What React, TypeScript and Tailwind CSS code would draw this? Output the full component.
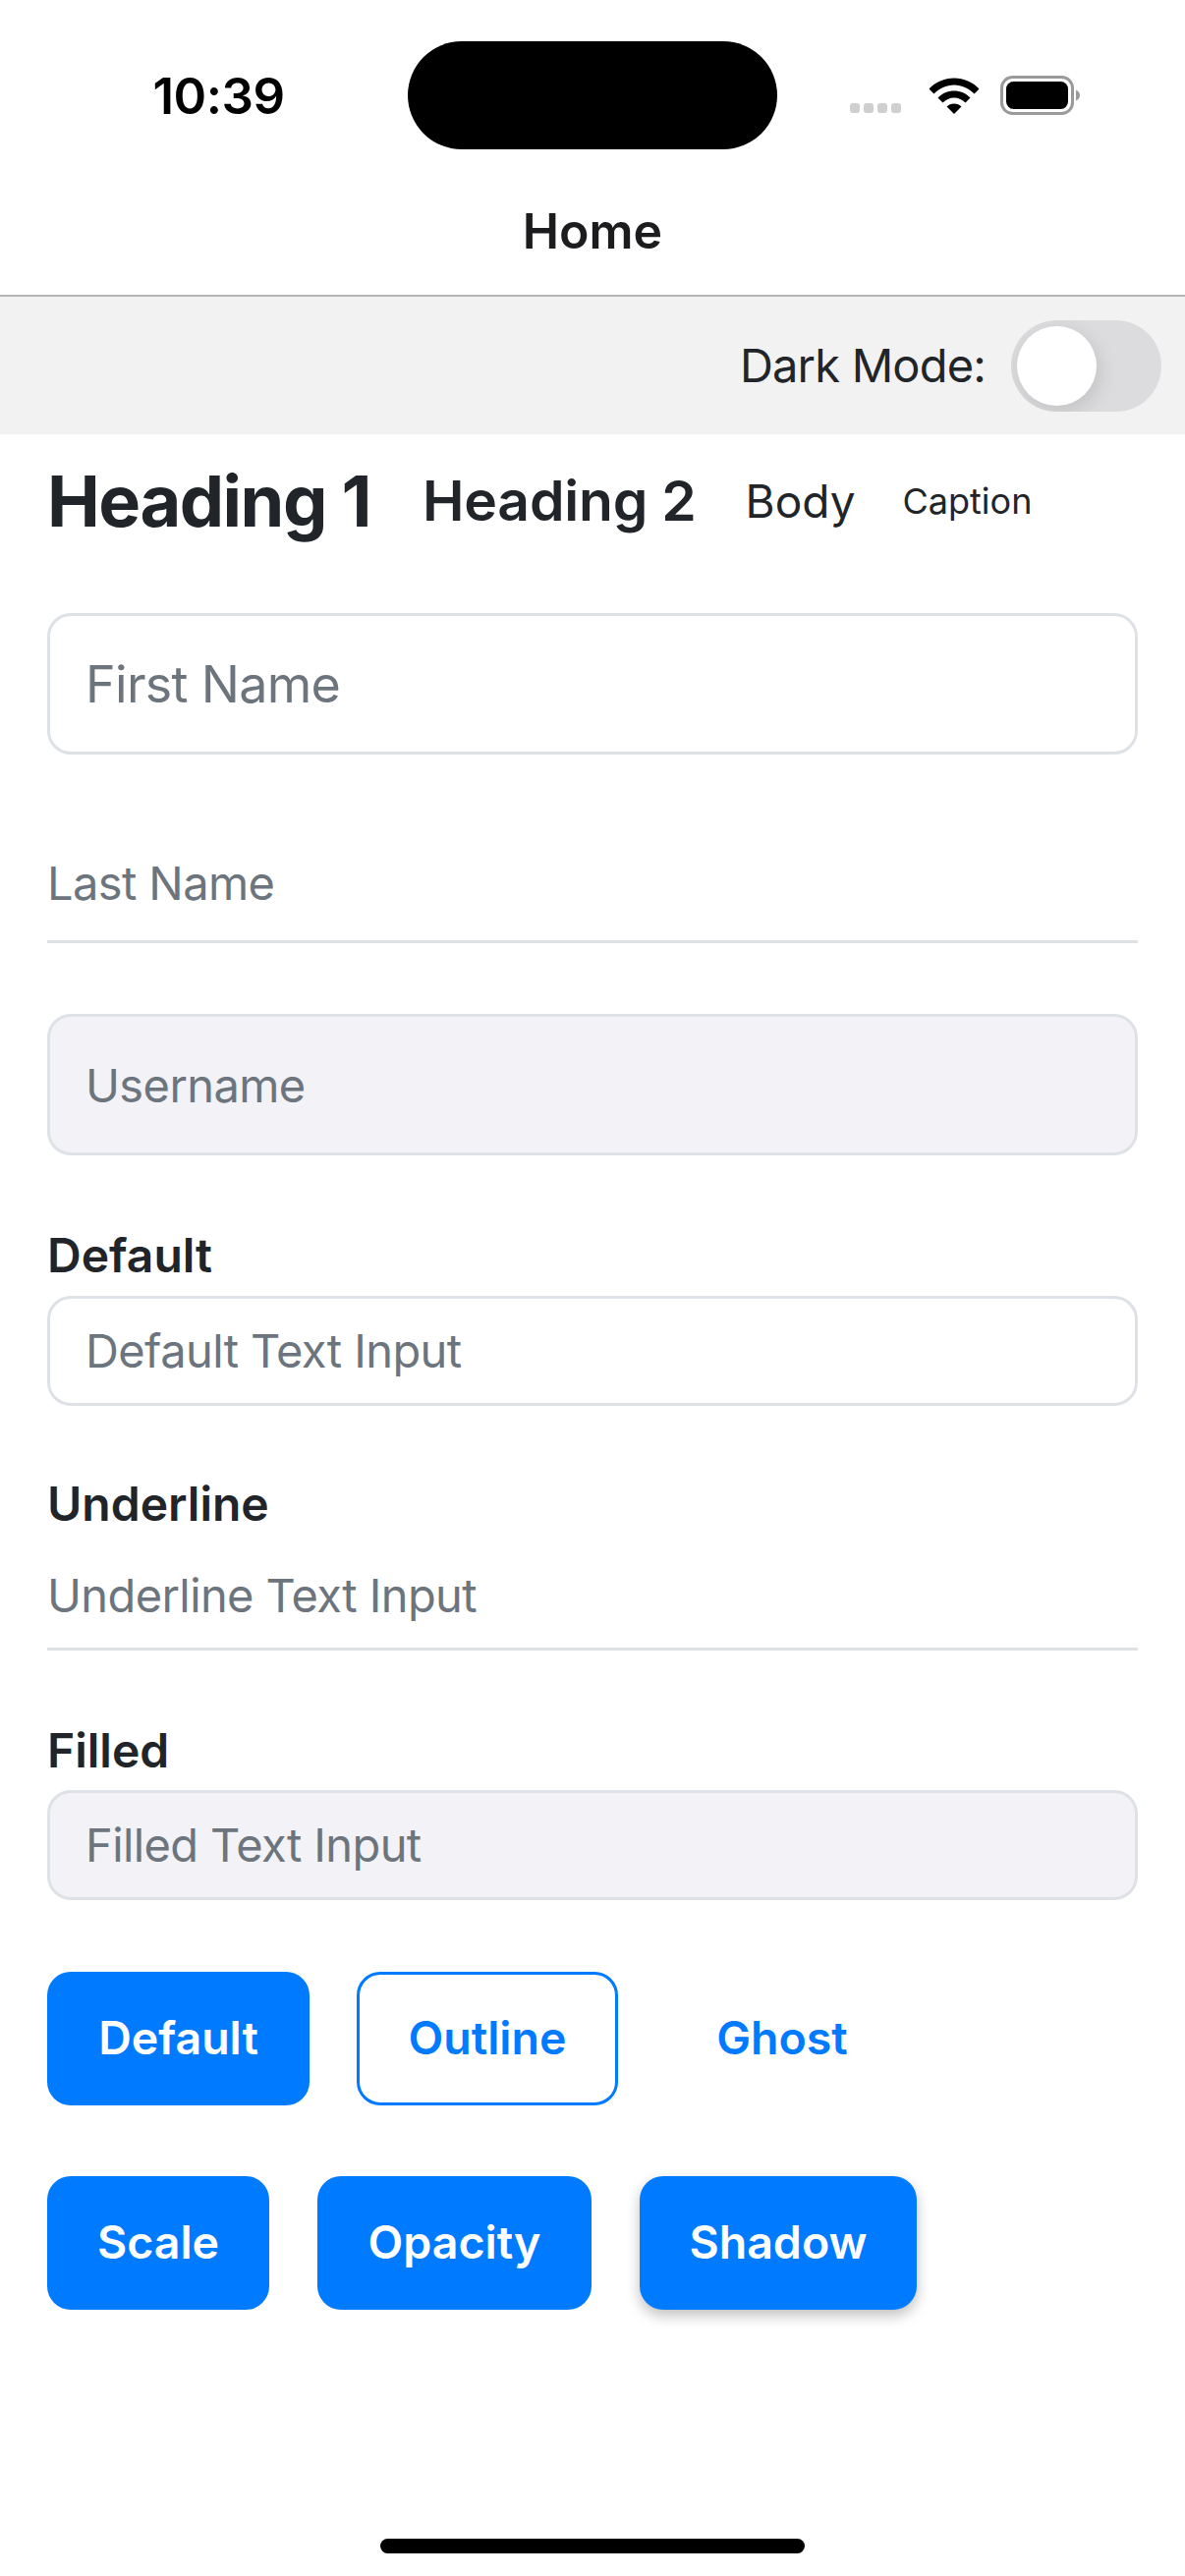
const FONT = "font-['Inter','Liberation_Sans',sans-serif]";

function WifiIcon() {
  return (
    <svg width="52" height="38" viewBox="0 0 52 38" fill="#000">
      <path d="M0.5 12.5C7 5.5 16 1.5 26 1.5S45 5.5 51.5 12.5L46.5 17.5C41 12 34 8.5 26 8.5S11 12 5.5 17.5Z" />
      <path d="M9.5 21.5C14 17 19.500 14.500 26 14.500S38 17 42.500 21.500L37.500 26.500C34.500 23.500 30.500 21.500 26 21.500S17.500 23.500 14.500 26.500Z" />
      <path d="M18.500 30.500C20.500 28.500 23 27.500 26 27.500S31.500 28.500 33.500 30.500L26 38Z" />
    </svg>
  );
}

function BatteryIcon() {
  return (
    <svg width="82" height="40" viewBox="0 0 82 40" fill="none">
      <rect x="1.5" y="1.5" width="72" height="37" rx="11" stroke="#9a9a9a" strokeWidth="3" />
      <rect x="6" y="6" width="63" height="28" rx="7.5" fill="#000" />
      <path d="M77 14.500C79.500 15.500 81 17.500 81 20S79.500 24.500 77 25.500Z" fill="#9a9a9a" />
    </svg>
  );
}

function StatusBar() {
  return (
    <div className="flex h-[180px] shrink-0 items-center pt-[14px]">
      <div className="flex w-[415px] justify-center pl-[30px]">
        <span className="text-[51px] leading-none font-semibold tracking-[-0.5px] text-black">10:39</span>
      </div>
      <div className="h-[110px] w-[376px] shrink-0 rounded-[55px] bg-black" />
      <div className="flex flex-1 items-center pl-[74px]">
        <div className="mt-[26px] flex gap-[4px]">
          <span className="h-[10px] w-[10px] rounded-[3px] bg-[#cfcfcf]" />
          <span className="h-[10px] w-[10px] rounded-[3px] bg-[#cfcfcf]" />
          <span className="h-[10px] w-[10px] rounded-[3px] bg-[#cfcfcf]" />
          <span className="h-[10px] w-[10px] rounded-[3px] bg-[#cfcfcf]" />
        </div>
        <div className="ml-[28px]"><WifiIcon /></div>
        <div className="ml-[21px]"><BatteryIcon /></div>
      </div>
    </div>
  );
}

const PLACEHOLDER = "text-[47px] tracking-[-0.6px] text-[#6c757d]";

function Box({ text, filled }: { text: string; filled?: boolean }) {
  return (
    <div className={`flex h-[112px] items-center rounded-[24px] border-[3px] border-[#dee2e6] px-[36px] ${PLACEHOLDER} ${filled ? "bg-[#f2f2f7]" : "bg-white"}`}>
      {text}
    </div>
  );
}

function Label({ text }: { text: string }) {
  return <div className="text-[48px] leading-[54px] font-semibold text-[#212529]">{text}</div>;
}

function Btn({ text, kind = "solid", width }: { text: string; kind?: "solid" | "outline" | "ghost" | "shadow"; width: string }) {
  const styles = {
    solid: "bg-[#007aff] text-white",
    shadow: "bg-[#007aff] text-white shadow-[0_6px_14px_rgba(0,0,0,0.25)]",
    outline: "border-[3px] border-[#007aff] bg-white text-[#007aff]",
    ghost: "text-[#007aff]",
  };
  return (
    <div className={`flex h-[136px] items-center justify-center rounded-[24px] text-[46.5px] font-semibold ${width} ${styles[kind]}`}>
      {text}
    </div>
  );
}

export default function App() {
  return (
    <div className={`flex h-[2622px] w-[1206px] flex-col overflow-hidden bg-white ${FONT}`}>
      <StatusBar />
      <div className="flex h-[122px] shrink-0 items-center justify-center border-b-[2px] border-[#b5b5b5] pb-[10px] text-[50px] font-semibold text-[#1c1c1e]">
        Home
      </div>
      <div className="flex h-[140px] shrink-0 items-center justify-end gap-[26px] bg-[#f2f2f2] pr-[24px]">
        <span className="text-[47px] tracking-[-0.8px] text-[#212529]">Dark Mode:</span>
        <div className="flex h-[93px] w-[153px] items-center overflow-hidden rounded-full bg-[#dcdcde] p-[6px]">
          <div className="h-[81px] w-[81px] rounded-full bg-white shadow-[3px_6px_20px_rgba(0,0,0,0.12)]" />
        </div>
      </div>
      <div className="flex flex-1 flex-col px-[48px]">
        <div className="mt-[32px] flex h-[72px] items-center text-[#212529]">
          <span className="text-[72px] font-bold tracking-[-1.5px]">Heading 1</span>
          <span className="ml-[53px] text-[57px] font-semibold tracking-[-0.2px]">Heading 2</span>
          <span className="ml-[50px] text-[46px]">Body</span>
          <span className="ml-[48px] text-[36px]">Caption</span>
        </div>
        <div className="mt-[78px] flex h-[144px] items-center rounded-[24px] border-[3px] border-[#dee2e6] px-[36px] pt-[2px] text-[52px] tracking-[-0.7px] text-[#6c757d]">
          First Name
        </div>
        <div className={`mt-[82px] flex h-[110px] items-center border-b-[3px] border-[#dee2e6] pb-[9px] ${PLACEHOLDER}`}>
          Last Name
        </div>
        <div className={`mt-[72px] flex h-[144px] items-center rounded-[24px] border-[3px] border-[#dee2e6] bg-[#f2f2f7] px-[36px] pt-[2px] ${PLACEHOLDER}`}>
          Username
        </div>
        <div className="mt-[75px]"><Label text="Default" /></div>
        <div className="mt-[14px]"><Box text="Default Text Input" /></div>
        <div className="mt-[73px]"><Label text="Underline" /></div>
        <div className={`flex h-[122px] items-center border-b-[3px] border-[#dee2e6] pt-[14px] ${PLACEHOLDER}`}>
          Underline Text Input
        </div>
        <div className="mt-[75px]"><Label text="Filled" /></div>
        <div className="mt-[13px]"><Box text="Filled Text Input" filled /></div>
        <div className="mt-[73px] flex gap-[48px]">
          <Btn text="Default" width="w-[267px]" />
          <Btn text="Outline" kind="outline" width="w-[266px]" />
          <Btn text="Ghost" kind="ghost" width="w-[238px]" />
        </div>
        <div className="mt-[72px] flex gap-[49px]">
          <Btn text="Scale" width="w-[226px]" />
          <Btn text="Opacity" width="w-[279px]" />
          <Btn text="Shadow" kind="shadow" width="w-[282px]" />
        </div>
      </div>
      <div className="flex h-[38px] shrink-0 justify-center">
        <div className="h-[15px] w-[432px] rounded-full bg-black" />
      </div>
    </div>
  );
}
